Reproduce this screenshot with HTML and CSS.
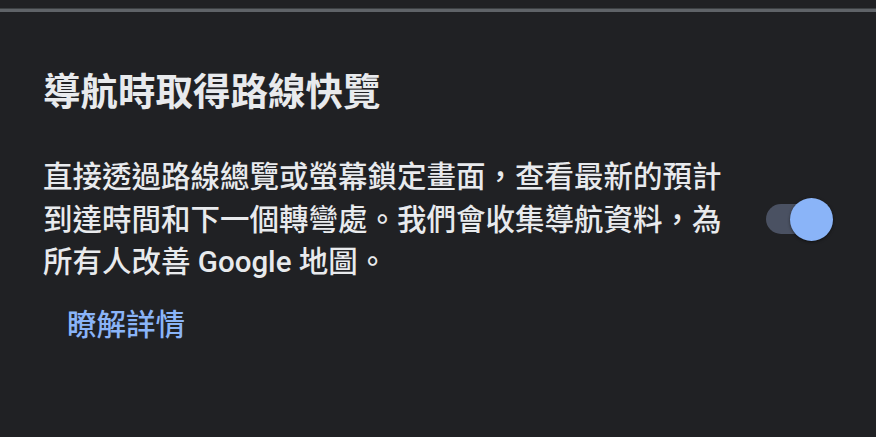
FILE: index.html
```html
<!DOCTYPE html>
<html lang="zh-Hant">
<head>
  <meta charset="UTF-8">
  <meta name="viewport" content="width=device-width, initial-scale=1.0">
  <title>導航時取得路線快覽</title>
  <link rel="stylesheet" href="styles.css">
</head>
<body>
  <div class="divider"></div>

  <div class="setting">
    <h2 class="setting-title">導航時取得路線快覽</h2>

    <div class="setting-row">
      <p class="setting-desc">直接透過路線總覽或螢幕鎖定畫面，查看最新的預計到達時間和下一個轉彎處。我們會收集導航資料，為所有人改善 Google 地圖。</p>

      <div class="toggle is-on" role="switch" aria-checked="true">
        <span class="toggle-track"></span>
        <span class="toggle-knob"></span>
      </div>
    </div>

    <a class="learn-more" href="#">瞭解詳情</a>
  </div>
</body>
</html>
```

FILE: styles.css
```css
html, body {
  margin: 0;
  height: 100%;
}
body {
  background: #202124;
  color: #e8eaed;
  font-family: Roboto, "Noto Sans CJK TC", sans-serif;
  padding-top: 8px;
  box-sizing: border-box;
}
.divider {
  height: 3px;
  background: #5f6368;
  border-top: 1px solid #3c4043;
}
.setting {
  padding: 0 43px;
}
.setting-title {
  margin: 58px 0 0;
  font-size: 37.5px;
  font-weight: 700;
  line-height: 44px;
}
.setting-row {
  display: flex;
  align-items: center;
  gap: 38px;
  margin-top: 42px;
}
.setting-desc {
  width: 690px;
  margin: 0;
  font-size: 29.5px;
  font-weight: 500;
  line-height: 42.5px;
}
.toggle {
  position: relative;
  width: 67px;
  height: 43px;
  flex-shrink: 0;
}
.toggle-track {
  position: absolute;
  left: 0;
  top: 6px;
  width: 62px;
  height: 30px;
  border-radius: 15px;
  background: #4a5162;
}
.toggle-knob {
  position: absolute;
  right: 0;
  top: 0;
  width: 43px;
  height: 43px;
  border-radius: 50%;
  background: #8ab4f8;
  box-shadow: 0 1px 3px rgba(0,0,0,0.5);
}
.learn-more {
  display: inline-block;
  margin-top: 20px;
  padding-left: 24px;
  font-size: 29.5px;
  font-weight: 500;
  line-height: 42px;
  color: #8ab4f8;
  text-decoration: none;
}
```
